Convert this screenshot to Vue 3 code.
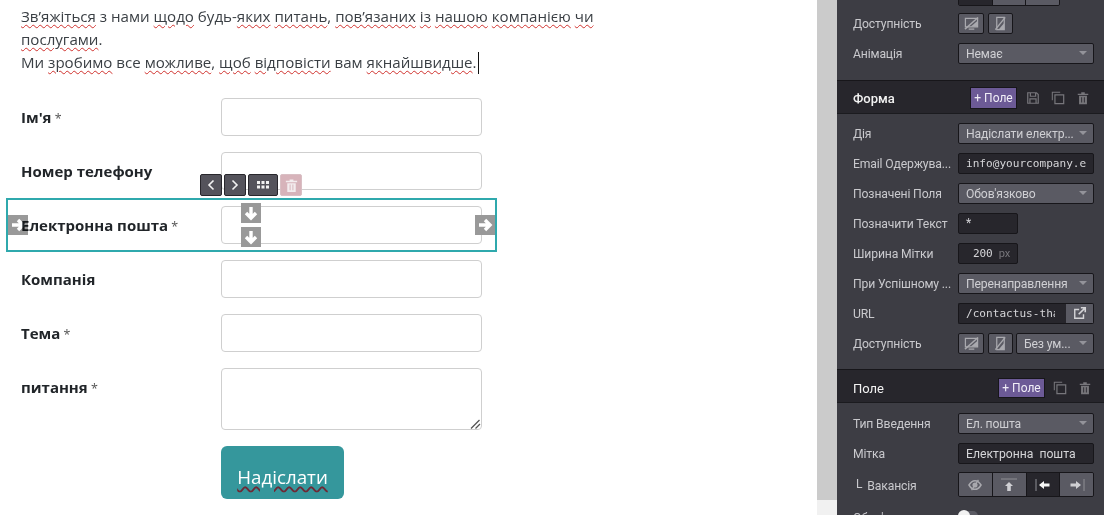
<script setup>
const fields = [
  { label: 'Ім\'я', required: true },
  { label: 'Номер телефону', required: false },
  { label: 'Електронна пошта', required: true },
  { label: 'Компанія', required: false },
  { label: 'Тема', required: true },
];
</script>

<template>
  <div class="page">
    <svg class="sprite" aria-hidden="true">
      <symbol id="i-desktop" viewBox="0 0 16 16">
        <path d="M1.500 2.500h13v9h-13z M5 14h6" fill="none" stroke="currentColor" stroke-width="1.300" />
        <path d="M1 14 15 1.500" stroke="currentColor" stroke-width="1.500" />
        <path d="M7 11.500h7.500V5z" fill="currentColor" />
      </symbol>
      <symbol id="i-mobile" viewBox="0 0 16 16">
        <path d="M4 1.500h8v13H4z" fill="none" stroke="currentColor" stroke-width="1.300" />
        <path d="M2.500 14.500 13 1.500" stroke="currentColor" stroke-width="1.500" />
        <path d="M6 14.500h6V7.500z" fill="currentColor" />
      </symbol>
      <symbol id="i-save" viewBox="0 0 16 16">
        <path d="M2 2h10l2 2v10H2z M5 2v4h6V2 M4.500 14V9h7v5" fill="none" stroke="currentColor" stroke-width="1.400" />
      </symbol>
      <symbol id="i-copy" viewBox="0 0 16 16">
        <path d="M1.500 10.500v-9h9" fill="none" stroke="currentColor" stroke-width="1.200" />
        <path d="M4.500 4.500h10v10h-10z" fill="none" stroke="currentColor" stroke-width="1.400" />
      </symbol>
      <symbol id="i-trash" viewBox="0 0 16 16">
        <path d="M2 3h12v1.500H2z M6 1.500h4V3H6z" fill="currentColor" />
        <path d="M3.500 5.500h9V15h-9z M6 7v6h1V7z M9 7v6h1V7z" fill="currentColor" fill-rule="evenodd" />
      </symbol>
      <symbol id="i-arrow" viewBox="0 0 16 16">
        <path d="M2 8h10 M8 3l5 5-5 5" fill="none" stroke="currentColor" stroke-width="3.400" />
      </symbol>
      <symbol id="i-down" viewBox="0 0 16 16">
        <path d="M8 2v10 M3 8l5 5 5-5" fill="none" stroke="currentColor" stroke-width="3.400" />
      </symbol>
    </svg>

    <main class="editor">
      <p class="intro">
        <span class="typo">Зв’яжіться</span> з нами <span class="typo">щодо</span> будь-<span class="typo">яких</span> <span class="typo">питань</span>, <span class="typo">пов’язаних</span> <span class="typo">із</span> <span class="typo">нашою</span> <span class="typo">компанією</span> <span class="typo">чи</span><br />
        <span class="typo">послугами</span>.<br />
        Ми <span class="typo">зробимо</span> все <span class="typo">можливе</span>, <span class="typo">щоб</span> <span class="typo">відповісти</span> вам <span class="typo">якнайшвидше</span>.<span class="caret"></span>
      </p>

      <form class="form" @submit.prevent>
        <div v-for="f in fields" :key="f.label" class="field">
          <label class="field__label">{{ f.label }}<span v-if="f.required" class="req"> *</span></label>
          <input class="field__input" type="text" />
        </div>
        <div class="field field--area">
          <label class="field__label">питання<span class="req"> *</span></label>
          <div class="area-wrap">
            <textarea class="field__input field__input--area"></textarea>
            <svg class="resizer" width="11" height="10" viewBox="0 0 11 10"><path d="M1 9.500 9.500 1 M5.500 9.500 10 5" stroke="#555" stroke-width="1.300" /></svg>
          </div>
        </div>
        <div class="field field--submit">
          <button class="submit" type="button"><span class="submit__text">Надіслати</span></button>
        </div>
      </form>

      <div class="selection"></div>
      <div class="move-bar">
        <button class="move-btn" type="button">
          <svg width="10" height="12" viewBox="0 0 10 12"><path d="M7.500 1.500 3 6l4.500 4.500" fill="none" stroke="currentColor" stroke-width="1.600" /></svg>
        </button>
        <button class="move-btn" type="button">
          <svg width="10" height="12" viewBox="0 0 10 12"><path d="M2.500 1.500 7 6l-4.500 4.500" fill="none" stroke="currentColor" stroke-width="1.600" /></svg>
        </button>
        <button class="move-btn move-btn--grid" type="button">
          <svg width="14" height="10" viewBox="0 0 14 10"><path d="M1 1h3v3H1z M5.500 1h3v3h-3z M10 1h3v3h-3z M1 5.500h3v3H1z M5.500 5.500h3v3h-3z M10 5.500h3v3h-3z" fill="currentColor" /></svg>
        </button>
        <button class="move-btn move-btn--del" type="button">
          <svg width="15" height="17"><use href="#i-trash" /></svg>
        </button>
      </div>
      <span class="grip grip--left"><svg width="16" height="16"><use href="#i-arrow" /></svg></span>
      <span class="grip grip--right"><svg width="16" height="16"><use href="#i-arrow" /></svg></span>
      <span class="grip grip--top"><svg width="16" height="16"><use href="#i-down" /></svg></span>
      <span class="grip grip--bottom"><svg width="16" height="16"><use href="#i-down" /></svg></span>
    </main>

    <div class="scrollbar"><div class="scrollbar__thumb"></div></div>

    <aside class="panel">
      <section class="panel__body panel__body--first">
        <div class="row">
          <span class="row__label"></span>
          <div class="segments segments--top"><span class="seg seg--on"></span><span class="seg"></span><span class="seg"></span></div>
        </div>
        <div class="row">
          <span class="row__label">Доступність</span>
          <div class="row__ctl">
            <button class="icon-btn" type="button"><svg width="15" height="15"><use href="#i-desktop" /></svg></button>
            <button class="icon-btn" type="button"><svg width="15" height="15"><use href="#i-mobile" /></svg></button>
          </div>
        </div>
        <div class="row">
          <span class="row__label">Анімація</span>
          <div class="select">Немає</div>
        </div>
      </section>

      <header class="panel__head">
        <span class="panel__title">Форма</span>
        <button class="add" type="button">+ Поле</button>
        <svg class="head-icon" width="14" height="14"><use href="#i-save" /></svg>
        <svg class="head-icon" width="14" height="14"><use href="#i-copy" /></svg>
        <svg class="head-icon" width="14" height="14"><use href="#i-trash" /></svg>
      </header>

      <section class="panel__body panel__body--form">
        <div class="row">
          <span class="row__label">Дія</span>
          <div class="select">Надіслати електр...</div>
        </div>
        <div class="row">
          <span class="row__label">Email Одержува...</span>
          <input class="text-in text-in--mono" value="info@yourcompany.example.com" readonly />
        </div>
        <div class="row">
          <span class="row__label">Позначені Поля</span>
          <div class="select">Обов'язково</div>
        </div>
        <div class="row">
          <span class="row__label">Позначити Текст</span>
          <input class="text-in text-in--short" value="*" readonly />
        </div>
        <div class="row">
          <span class="row__label">Ширина Мітки</span>
          <div class="text-in text-in--short text-in--num"><b>200</b><i>px</i></div>
        </div>
        <div class="row">
          <span class="row__label">При Успішному ...</span>
          <div class="select">Перенаправлення</div>
        </div>
        <div class="row">
          <span class="row__label">URL</span>
          <div class="url">
            <input class="text-in text-in--mono" value="/contactus-thank-you" readonly />
            <button class="url__open" type="button">
              <svg width="14" height="14" viewBox="0 0 16 16"><path d="M12 9.500V14H2V4h5" fill="none" stroke="currentColor" stroke-width="1.600" /><path d="M6.500 9.500 13 3 M9 2h5v5" fill="none" stroke="currentColor" stroke-width="1.800" /></svg>
            </button>
          </div>
        </div>
        <div class="row">
          <span class="row__label">Доступність</span>
          <div class="row__ctl">
            <button class="icon-btn" type="button"><svg width="15" height="15"><use href="#i-desktop" /></svg></button>
            <button class="icon-btn" type="button"><svg width="15" height="15"><use href="#i-mobile" /></svg></button>
            <div class="select select--mini">Без ум...</div>
          </div>
        </div>
      </section>

      <header class="panel__head panel__head--field">
        <span class="panel__title panel__title--light">Поле</span>
        <button class="add add--field" type="button">+ Поле</button>
        <svg class="head-icon" width="14" height="14"><use href="#i-copy" /></svg>
        <svg class="head-icon" width="14" height="14"><use href="#i-trash" /></svg>
      </header>

      <section class="panel__body">
        <div class="row">
          <span class="row__label">Тип Введення</span>
          <div class="select">Ел. пошта</div>
        </div>
        <div class="row">
          <span class="row__label">Мітка</span>
          <input class="text-in text-in--label" value="Електронна пошта" readonly />
        </div>
        <div class="row row--tall">
          <span class="row__label row__label--sub"><em>L</em>Вакансія</span>
          <div class="segments">
            <span class="seg seg--dim">
              <svg width="14" height="12" viewBox="0 0 16 14"><path d="M1 7c2-3.500 4.500-5 7-5s5 1.500 7 5c-2 3.500-4.500 5-7 5S3 10.500 1 7z" fill="none" stroke="currentColor" stroke-width="1.800" /><path d="M5 7a3 3 0 0 1 6 0 3 3 0 0 1-6 0z" fill="currentColor" /><path d="M4 13 12 1" stroke="currentColor" stroke-width="1.400" /></svg>
            </span>
            <span class="seg">
              <svg width="16" height="14" viewBox="0 0 16 14"><path d="M0 1h16" stroke="#8f8f95" stroke-width="1" /><path d="M8 4l4 4H9.800v5H6.200V8H4z" fill="currentColor" /></svg>
            </span>
            <span class="seg seg--on">
              <svg width="16" height="14" viewBox="0 0 16 14"><path d="M1 1v12" stroke="#8f8f95" stroke-width="1" /><path d="M4 7l5-4v2.500h5.500v3H9V11z" fill="currentColor" /></svg>
            </span>
            <span class="seg">
              <svg width="16" height="14" viewBox="0 0 16 14"><path d="M15 1v12" stroke="#8f8f95" stroke-width="1" /><path d="M12 7 7 3v2.500H1.500v3H7V11z" fill="currentColor" /></svg>
            </span>
          </div>
        </div>
        <div class="row">
          <span class="row__label row__label--cut">Обов'язково</span>
          <span class="toggle"></span>
        </div>
      </section>
    </aside>
  </div>
</template>

<style scoped>
.page {
  display: flex;
  width: 1104px;
  height: 515px;
  overflow: hidden;
  background: #fff;
  font-family: 'Open Sans', 'Noto Sans', sans-serif;
  color: #212529;
}

.sprite {
  position: absolute;
  width: 0;
  height: 0;
}

.editor {
  position: relative;
  flex: 0 0 817px;
  padding: 5px 0 0 21px;
  box-sizing: border-box;
}

.intro {
  margin: 0 0 24px;
  width: 600px;
  font-size: 15.100px;
  line-height: 23px;
  color: #3a3f44;
}

.typo {
  text-decoration: underline wavy #d0322e 1.300px;
  text-underline-offset: 2px;
}

.caret {
  display: inline-block;
  width: 1px;
  height: 22px;
  margin-left: 1px;
  vertical-align: -6px;
  background: #111;
}

.field {
  display: flex;
  align-items: center;
  height: 38px;
  margin-bottom: 16px;
}

.field--area {
  align-items: flex-start;
  height: 62px;
}

.field--submit {
  height: 53px;
  margin: 0;
  padding-left: 200px;
}

.field__label {
  flex: 0 0 200px;
  font-size: 15px;
  font-weight: 700;
  color: #212529;
}

.field--area .field__label {
  line-height: 38px;
}

.req {
  font-size: 12.500px;
  font-weight: 400;
  color: #555;
}

.field__input {
  box-sizing: border-box;
  width: 261px;
  height: 38px;
  padding: 0;
  border: 1px solid #cfcfcf;
  border-radius: 4px;
  background: #fff;
  outline: none;
}

.area-wrap {
  position: relative;
  height: 62px;
}

.field__input--area {
  display: block;
  height: 62px;
  resize: none;
}

.resizer {
  position: absolute;
  right: 1px;
  bottom: 1px;
}

.submit {
  width: 123px;
  height: 53px;
  padding: 7px 0 0;
  border: 0;
  border-radius: 6px;
  background: #35979c;
  color: #fff;
  font-family: inherit;
  font-size: 18.750px;
}

.submit__text {
  text-decoration: underline wavy #6d2a36 1.500px;
  text-underline-offset: 2px;
}

.selection {
  position: absolute;
  left: 6px;
  top: 198px;
  width: 491px;
  height: 54px;
  box-sizing: border-box;
  border: 2px solid #2fa9ad;
}

.move-bar {
  position: absolute;
  left: 200px;
  top: 174px;
  display: flex;
  gap: 2px;
}

.move-btn {
  display: flex;
  align-items: center;
  justify-content: center;
  width: 22px;
  height: 22px;
  padding: 0;
  border: 1px solid #28272c;
  border-radius: 2px;
  background: #54535b;
  color: #f2f2f2;
}

.move-btn--grid {
  width: 30px;
}

.move-btn--del {
  border-color: #d9bfc4;
  background: #d7b3ba;
  color: #f3ecee;
}

.grip {
  position: absolute;
  display: flex;
  align-items: center;
  justify-content: center;
  width: 20px;
  height: 20px;
  background: #999;
  color: #fff;
}

.grip--left { left: 8px; top: 215px; mix-blend-mode: multiply; }
.grip--right { left: 475px; top: 215px; }
.grip--top { left: 241px; top: 203px; }
.grip--bottom { left: 241px; top: 227px; }

.scrollbar {
  flex: 0 0 20px;
  background: #f1f1f1;
}

.scrollbar__thumb {
  height: 500px;
  background: #cbcbcb;
}

.panel {
  flex: 0 0 267px;
  height: 515px;
  overflow: hidden;
  background: #3d3d44;
  font-family: Roboto, 'Noto Sans', sans-serif;
  font-size: 12.200px;
  letter-spacing: -0.150px;
  color: #c9c9cd;
}

.panel__body {
  padding: 5px 0;
}

.panel__body--first {
  margin-top: -22px;
  padding: 0 0 12px;
}

.panel__body--form {
  padding: 4px 0;
}

.panel__head {
  display: flex;
  align-items: center;
  height: 34px;
  box-sizing: border-box;
  padding: 2px 0 0 16px;
  border-top: 1px solid #17161a;
  border-bottom: 1px solid #1b1b1f;
  background: #27262c;
}

.panel__title {
  flex: 0 0 117px;
  color: #f2f2f2;
  font-size: 13px;
  font-weight: 500;
  letter-spacing: 0;
}

.panel__title--light {
  flex-basis: 145px;
  font-weight: 400;
}

.panel__head--field {
  margin-top: 7px;
  padding-top: 4px;
}

.add {
  width: 47px;
  height: 22px;
  margin-right: 9px;
  padding: 0;
  border: 1px solid #17161a;
  background: #6c5a96;
  color: #f1eef7;
  font-family: inherit;
  font-size: 12px;
}

.add--field {
  height: 20px;
  margin-right: 8px;
}

.head-icon {
  margin-right: 11px;
  color: #77767b;
}

.row {
  display: flex;
  align-items: center;
  height: 30px;
  padding-left: 16px;
}

.row--tall {
  height: 33px;
}

.row__label {
  flex: 0 0 105px;
  padding-top: 1px;
  white-space: nowrap;
}

.row__label--sub {
  display: flex;
  gap: 5px;
  padding: 2px 0 0 3px;
  flex-basis: 102px;
}

.row__label--sub em {
  font-style: normal;
  font-size: 12px;
  line-height: 11px;
}

.row__label--cut {
  padding-top: 4px;
}

.row__ctl {
  display: flex;
  gap: 3px;
}

.select {
  position: relative;
  box-sizing: border-box;
  width: 136px;
  height: 21px;
  padding: 1px 0 0 7px;
  border: 1px solid #17161a;
  border-radius: 2px;
  background: #5a5a63;
  color: #cfcfd3;
  line-height: 19px;
  white-space: nowrap;
  overflow: hidden;
}

.select::after {
  content: '';
  position: absolute;
  right: 6px;
  top: 7px;
  border: 4px solid transparent;
  border-top: 4px solid #93939a;
  border-bottom: 0;
}

.select--mini {
  width: 78px;
}

.text-in {
  box-sizing: border-box;
  width: 136px;
  height: 21px;
  padding: 0 7px;
  border: 1px solid #17161a;
  border-radius: 2px;
  outline: none;
  background: #27262c;
  color: #d5d5d8;
  font-family: inherit;
  font-size: inherit;
  line-height: 19px;
  white-space: nowrap;
  overflow: hidden;
}

.text-in--mono {
  font-family: 'DejaVu Sans Mono', monospace;
  font-size: 11.100px;
  letter-spacing: 0;
}

.text-in--short {
  width: 60px;
}

.text-in--num {
  display: flex;
  justify-content: flex-end;
  gap: 6px;
  font-family: 'DejaVu Sans Mono', monospace;
  font-size: 11.100px;
}

.text-in--num b {
  font-weight: 400;
}

.text-in--num i {
  font-family: Roboto, sans-serif;
  font-style: normal;
  color: #77767b;
}

.text-in--label {
  padding-top: 1px;
  letter-spacing: 0;
  word-spacing: 3px;
}

.icon-btn {
  display: flex;
  align-items: center;
  justify-content: center;
  box-sizing: border-box;
  width: 26px;
  height: 21px;
  padding: 0;
  border: 1px solid #17161a;
  border-radius: 2px;
  background: #5a5a63;
  color: #a9a9ae;
}

.icon-btn + .icon-btn {
  width: 25px;
  margin-left: 1px;
}

.url {
  display: flex;
  width: 136px;
}

.url .text-in {
  width: 108px;
  padding-right: 11px;
  border-right: 0;
  border-radius: 2px 0 0 2px;
}

.url__open {
  display: flex;
  align-items: center;
  justify-content: center;
  box-sizing: border-box;
  width: 28px;
  height: 21px;
  padding: 0;
  border: 1px solid #17161a;
  border-left: 0;
  border-radius: 0 2px 2px 0;
  background: #5a5a63;
  color: #d5d5d8;
}

.segments {
  display: flex;
  width: 136px;
  height: 25px;
  box-sizing: border-box;
  border: 1px solid #17161a;
  border-radius: 2px;
  overflow: hidden;
}

.segments--top {
  width: 102px;
}

.seg {
  flex: 1;
  display: flex;
  align-items: center;
  justify-content: center;
  border-left: 1px solid #17161a;
  background: #5a5a63;
  color: #cfcfd3;
}

.seg:first-child {
  border-left: 0;
}

.seg--dim {
  color: #a9a9ae;
}

.seg--on {
  background: #27262c;
  color: #f7f7f7;
}

.toggle {
  position: relative;
  width: 20px;
  height: 10px;
  border-radius: 6px;
  background: #5a5a63;
}

.toggle::before {
  content: '';
  position: absolute;
  left: 0;
  top: -1px;
  width: 12px;
  height: 12px;
  border-radius: 50%;
  background: #f2f2f2;
}
</style>

<style>
html,
body {
  margin: 0;
  overflow: hidden;
}
</style>
